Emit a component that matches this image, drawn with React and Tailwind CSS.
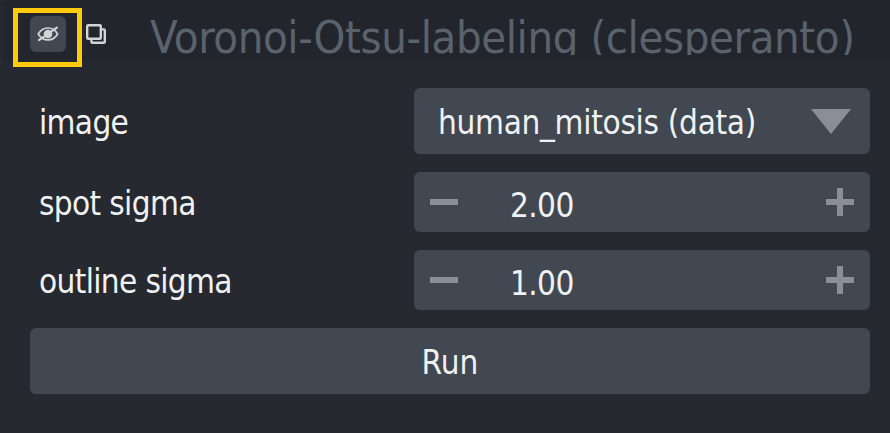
function EyeOff() {
  return (
    <svg width="22" height="18" viewBox="0 0 22 18" fill="none" stroke="#d2d4d6">
      <path d="M1.2 9C3.6 5 7 3 11 3S18.400 5 20.600 9C18.400 12.800 15 14.900 11 14.900S3.600 12.800 1.200 9Z" strokeWidth="1.700" />
      <circle cx="11" cy="9" r="4.300" fill="#d2d4d6" stroke="none" />
      <path d="M1.300 15.600L20.600 2.200" strokeWidth="2.200" />
    </svg>
  );
}

function Copies() {
  return (
    <svg width="20" height="20" viewBox="0 0 20 20" fill="none" stroke="#d2d4d6" strokeWidth="2.400">
      <rect x="1.200" y="1.200" width="13.600" height="13.600" rx="1" />
      <path d="M15 5.400H17.800Q18.800 5.400 18.800 6.400V17.800Q18.800 18.800 17.800 18.800H6.400Q5.400 18.800 5.400 17.800V15" />
    </svg>
  );
}

function Row({ label, children }) {
  return (
    <div className="flex items-center">
      <div className="w-[384px] pl-[9px] pt-[3px] leading-[40px] tracking-[-0.65px]">{label}</div>
      {children}
    </div>
  );
}

function Spin({ value }) {
  return (
    <div className="flex h-[60px] w-[456px] items-center rounded-[6px] bg-[#414851] pl-4 pr-4">
      <svg width="28" height="28" viewBox="0 0 28 28" fill="#8b8e95">
        <path d="M0 11H28V17H0Z" />
      </svg>
      <span className="flex-1 pl-[52px] pt-[8px] leading-[40px] tracking-[-0.6px]">{value}</span>
      <svg width="28" height="28" viewBox="0 0 28 28" fill="#8b8e95">
        <path d="M11 0H17V11H28V17H17V28H11V17H0V11H11Z" />
      </svg>
    </div>
  );
}

export default function App() {
  return (
    <div className="h-[433px] w-[890px] overflow-hidden whitespace-nowrap bg-[#262930] font-['DejaVu_Sans_Condensed','DejaVu_Sans',sans-serif] text-[33px] [font-stretch:condensed] text-[#f0f1f2]">
      <div className="pl-[3px] pt-px">
        <header className="flex h-[60px] bg-[#22252c]">
          <div className="ml-[10px] mt-[7px] flex h-[59px] w-[69px] shrink-0 items-start border-[5px] border-[#ffc90e] pl-[12px] pt-[3px]">
            <div className="flex h-9 w-9 items-center justify-center rounded-[6px] bg-[#414851]">
              <EyeOff />
            </div>
          </div>
          <div className="ml-[4px] mt-[23px] shrink-0">
            <Copies />
          </div>
          <h1 className="ml-[44px] h-[54px] overflow-hidden pt-[7px] text-[45px] leading-[60px] tracking-[-0.41px] text-[#5a626c]">
            Voronoi-Otsu-labeling (clesperanto)
          </h1>
        </header>
      </div>
      <main className="flex flex-col gap-[18px] pl-[30px] pr-5 pt-[27px]">
        <Row label="image">
          <div className="flex h-[66px] w-[456px] items-center justify-between rounded-[6px] bg-[#414851] pl-[24px] pr-[19px]">
            <span className="pt-[3px] leading-[40px] tracking-[-0.3px]">human_mitosis (data)</span>
            <svg width="40" height="25" viewBox="0 0 40 25">
              <path d="M0 0H40L20 25Z" fill="#8b8e95" />
            </svg>
          </div>
        </Row>
        <Row label="spot sigma">
          <Spin value="2.00" />
        </Row>
        <Row label="outline sigma">
          <Spin value="1.00" />
        </Row>
        <button className="flex h-[66px] items-center justify-center rounded-[6px] bg-[#414851] pt-[3px]">Run</button>
      </main>
    </div>
  );
}
